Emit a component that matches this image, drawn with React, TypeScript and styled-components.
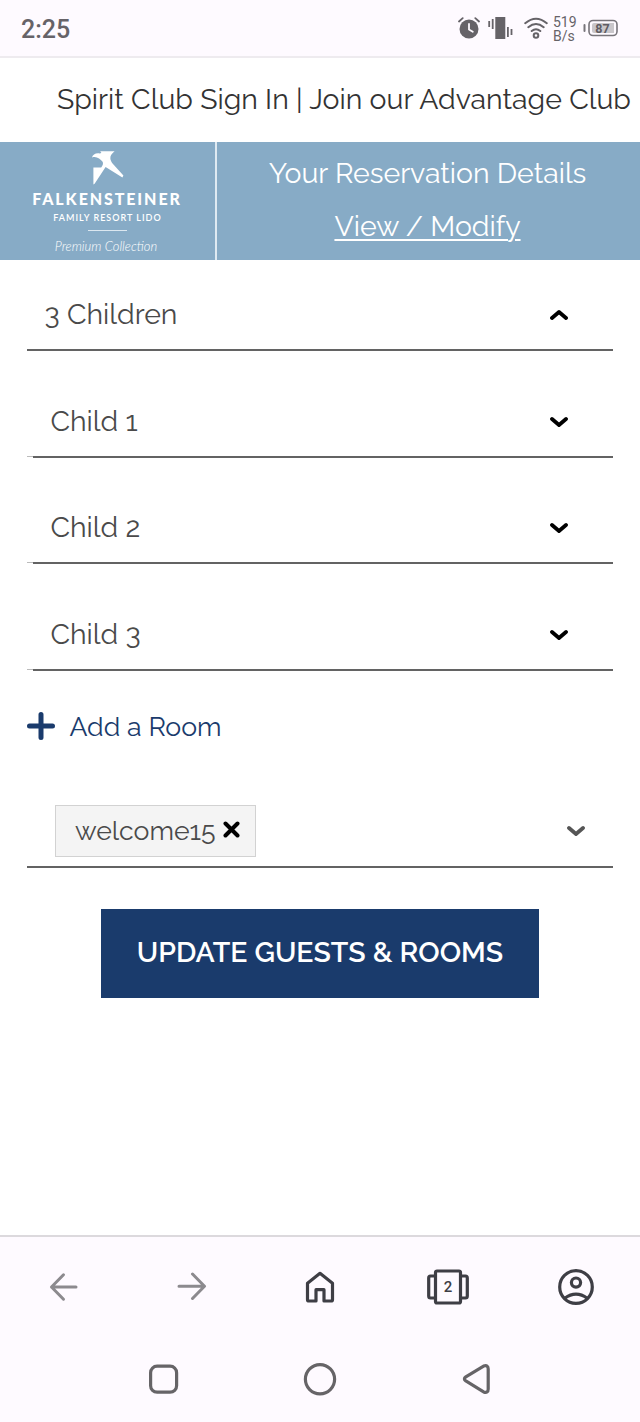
import React from "react";
import styled, { createGlobalStyle } from "styled-components";

const GlobalStyle = createGlobalStyle`
  *, *::before, *::after { box-sizing: border-box; }
  body { margin: 0; background: #fff; }
  button { border: 0; background: none; padding: 0; margin: 0; font: inherit; color: inherit; }
  svg { display: block; flex: none; }
`;

const Screen = styled.div`
  width: 640px;
  height: 1422px;
  display: flex;
  flex-direction: column;
  overflow: hidden;
  background: #fff;
  color: #4a4a4a;
  font-family: Raleway, Lato, sans-serif;
  font-size: 28.44px;
  white-space: nowrap;
`;

const StatusBar = styled.header`
  height: 58px;
  flex: none;
  display: flex;
  align-items: center;
  padding: 0 22px 1px 21px;
  background: #fefaff;
  border-bottom: 2px solid #eeebef;
  color: #666368;
  font-family: Roboto, sans-serif;
`;

const Clock = styled.span`
  flex: 1;
  font-size: 25px;
  font-weight: 500;
  line-height: 30px;
  padding-top: 4px;
`;

const StatusIcons = styled.div`
  display: flex;
  align-items: center;
`;

const Spacer = styled.span<{ $w: number }>`
  width: ${(p) => p.$w}px;
`;

const NetSpeed = styled.span`
  width: 25px;
  margin: 2px 5px 0 5px;
  font-size: 14px;
  line-height: 14px;
`;

const AccountLinks = styled.nav`
  height: 84px;
  flex: none;
  display: flex;
  align-items: center;
  padding: 0 0 2px 57px;
  color: #333;
  letter-spacing: 0.02px;
`;

const Banner = styled.section`
  height: 118px;
  flex: none;
  display: flex;
  background: #87abc6;
  color: #fff;
`;

const Brand = styled.div`
  width: 217px;
  display: flex;
  flex-direction: column;
  align-items: center;
  padding-top: 9px;
  border-right: 2px solid #dfeaf2;
  font-family: Lato, sans-serif;
`;

const BrandName = styled.span`
  margin: 5px 1px 0 0;
  font-size: 16px;
  font-weight: 900;
  line-height: 18px;
  letter-spacing: 1.9px;
`;

const BrandPlace = styled.span`
  margin-top: 4px;
  font-size: 9px;
  font-weight: 600;
  line-height: 12px;
  letter-spacing: 1px;
`;

const BrandRule = styled.span`
  width: 39px;
  height: 1px;
  margin-top: 6px;
  background: #dbe7f0;
`;

const BrandTier = styled.span`
  margin: 6px 3px 0 0;
  font-size: 13px;
  font-style: italic;
  font-weight: 300;
  line-height: 18px;
`;

const Reservation = styled.div`
  flex: 1;
  display: flex;
  flex-direction: column;
  align-items: center;
  padding: 5px 2px 0 0;
  line-height: 53px;
`;

const ModifyLink = styled.a`
  text-decoration: underline;
  text-decoration-thickness: 2px;
  text-underline-offset: 3px;
`;

const Form = styled.main`
  flex: 1;
  display: flex;
  flex-direction: column;
  padding: 0 27px;
`;

const SelectRow = styled.div<{ $height: number }>`
  height: ${(p) => p.$height}px;
  display: flex;
  align-items: flex-end;
  justify-content: space-between;
  padding: 0 45px 15px 17.5px;
  border-bottom: 2px solid #636363;
  line-height: 40px;
`;

const ChildField = styled.div`
  display: flex;
  align-items: flex-end;

  &::before {
    content: "";
    width: 6px;
    height: 1px;
    background: #bbb;
    margin-bottom: 1px;
  }

  > div { flex: 1; }
`;

const ChevronSlot = styled.span`
  display: flex;
  padding-bottom: 13px;
`;

const AddRoom = styled.button`
  display: flex;
  align-items: center;
  gap: 14.5px;
  height: 28px;
  margin-top: 41px;
  color: #1a3b6c;
  font-size: 26.67px;
  line-height: 30px;

  > span { padding-top: 1px; }
`;

const PromoField = styled.div`
  display: flex;
  align-items: center;
  justify-content: space-between;
  height: 63px;
  margin-top: 65px;
  padding: 0 28px 10px;
  border-bottom: 2px solid #636363;
`;

const Chip = styled.span`
  display: flex;
  align-items: center;
  gap: 7px;
  width: 201px;
  height: 52px;
  padding: 0 0 3px 19px;
  background: #f4f4f4;
  border: 1px solid #d2d2d2;
  font-size: 26.67px;

  > span { padding-top: 2px; }
`;

const SubmitButton = styled.button`
  align-self: center;
  width: 438px;
  height: 89px;
  margin-top: 41px;
  padding-bottom: 3px;
  background: #1a3b6c;
  color: #fff;
  font-size: 28.44px;
  font-weight: 600;
`;

const BrowserBar = styled.nav`
  height: 102px;
  flex: none;
  display: grid;
  grid-template-columns: repeat(5, 1fr);
  place-items: center;
  background: #fefaff;
  border-top: 2px solid #dcd9dd;
  color: #3e3e45;
`;

const SystemBar = styled.nav`
  height: 85px;
  flex: none;
  display: flex;
  justify-content: center;
  gap: 122px;
  padding-top: 25px;
  background: #fefaff;
  color: #666467;
`;

const TabCount = styled.text`
  font: 500 15px Roboto, sans-serif;
`;

const BatteryText = styled.text`
  font: 700 12.5px Roboto, sans-serif;
`;

const Chevron = ({ up, color = "#000" }: { up?: boolean; color?: string }) => (
  <svg width="18" height="12" viewBox="0 0 18 12" fill="none" stroke={color} strokeWidth="3.8" strokeLinecap="round" strokeLinejoin="round">
    <path d={up ? "M2 9 9 3l7 6" : "M2 3l7 6 7-6"} />
  </svg>
);

const AlarmIcon = () => (
  <svg width="22" height="22" viewBox="0 0 22 22" fill="none" strokeLinecap="round">
    <circle cx="11" cy="12" r="9.5" fill="#666368" />
    <path d="M1 4.5 4.7 1.2M21 4.5l-3.7-3.3" stroke="#666368" strokeWidth="1.8" />
    <path d="M11 7v5.4l3.8 2.3" stroke="#fefaff" strokeWidth="1.8" />
  </svg>
);

const VibrateIcon = () => (
  <svg width="26" height="22" viewBox="0 0 26 22" fill="#666368">
    <path d="M7.3 0h10v22h-10zM3.8 2h1.8v10H3.8zM.3 4h1.8v6H.3zM19 10h1.8v10H19zM22.6 12h1.8v6h-1.8z" />
  </svg>
);

const WifiIcon = () => (
  <svg width="24" height="22" viewBox="0 0 24 22" fill="none" stroke="#666368" strokeWidth="2" strokeLinecap="round">
    <path d="M1.2 6.2q10.8-9 21.6 0M4.3 10.2q7.7-6.4 15.4 0M7.7 14q4.3-3.6 8.6 0" />
    <circle cx="12" cy="18.5" r="2.3" />
  </svg>
);

const BatteryIcon = () => (
  <svg width="35" height="18" viewBox="0 0 35 18" fill="none">
    <path d="M1.5 6v6" stroke="#77747a" strokeWidth="2" strokeLinecap="round" />
    <rect x="6" y="1.5" width="28" height="15" rx="4" stroke="#77747a" strokeWidth="1.6" />
    <path d="M11 4h20v10H11a2 2 0 0 1-2-2V6a2 2 0 0 1 2-2z" fill="#c9c6ca" />
    <BatteryText x="19.5" y="13.5" textAnchor="middle" fill="#5f5c62">87</BatteryText>
  </svg>
);

const BirdMark = () => (
  <svg width="32" height="34" viewBox="0 0 32 34" fill="#fff">
    <path d="M0 6.5C.6 3.6 3.6 1.8 7.6 2.4L9.4 2 8.2.3h14.4c-1.9 1.6-3.5 3.2-4.1 5.2-.5 2.2.2 4.4 1.6 6.4L31.4 24.4l-1 2.2L13.6 16 2.6 32.8l-1.2.6V16.4h7.8c1.8-2 2.4-4.1 1.2-5.8C8.2 8.2 4.6 4.8 0 6.5z" />
  </svg>
);

const PlusIcon = () => (
  <svg width="28" height="28" viewBox="0 0 28 28" fill="none" stroke="#1a3b6c" strokeWidth="5" strokeLinecap="round">
    <path d="M14 2.5v23M2.5 14h23" />
  </svg>
);

const CloseIcon = () => (
  <svg width="17" height="17" viewBox="0 0 17 17" fill="none" stroke="#000" strokeWidth="4" strokeLinecap="round">
    <path d="m2.5 2.5 12 12M14.5 2.5l-12 12" />
  </svg>
);

const ArrowIcon = ({ forward }: { forward?: boolean }) => (
  <svg width="30" height="30" viewBox="0 0 30 30" fill="none" stroke="#8c8a8e" strokeWidth="3" strokeLinecap="round" strokeLinejoin="round">
    <path d={forward ? "M2 14.2h25M15.5 2 27.5 14.2 15.5 26.5" : "M27 15H2.5M14.5 2.8 2.5 15l12 12.2"} />
  </svg>
);

const HomeIcon = () => (
  <svg width="30" height="32" viewBox="0 0 30 32" fill="none" stroke="currentColor" strokeWidth="3.2" strokeLinejoin="round">
    <path d="M2.5 12.2 15 2.3l12.5 9.9v16.2q0 1.6-1.6 1.6H19V18.7h-8V30H4.1q-1.6 0-1.6-1.6z" />
  </svg>
);

const TabsIcon = () => (
  <svg width="42" height="36" viewBox="0 0 42 36" fill="none" stroke="currentColor" strokeWidth="3.2" strokeLinejoin="round">
    <rect x="8.5" y="2" width="25" height="32" rx="1.5" />
    <path d="M8.5 7h-5Q1.7 7 1.7 9v18q0 2 1.8 2h5M33.5 7h5q1.8 0 1.8 2v18q0 2-1.8 2h-5" />
    <TabCount x="21" y="23.3" textAnchor="middle" fill="currentColor" stroke="none">2</TabCount>
  </svg>
);

const ProfileIcon = () => (
  <svg width="36" height="36" viewBox="0 0 36 36" fill="none" stroke="currentColor" strokeWidth="3.2">
    <circle cx="18" cy="18" r="16.3" />
    <circle cx="18" cy="13.6" r="4.6" />
    <path d="M6.8 29.2q11.2-8.2 22.4 0" />
  </svg>
);

const RecentsIcon = () => (
  <svg width="34" height="34" viewBox="0 0 34 34" fill="none" stroke="currentColor" strokeWidth="3.2">
    <rect x="3.6" y="4.2" width="26" height="26" rx="6.5" />
  </svg>
);

const HomeCircleIcon = () => (
  <svg width="34" height="34" viewBox="0 0 34 34" fill="none" stroke="currentColor" strokeWidth="3.2">
    <circle cx="17" cy="17.2" r="14.6" />
  </svg>
);

const BackTriangleIcon = () => (
  <svg width="34" height="34" viewBox="0 0 34 34" fill="none" stroke="currentColor" strokeWidth="3.2" strokeLinejoin="round">
    <path d="M24.6 4.1 6.8 14.9q-2.8 2 0 4l17.8 11q4.6 1.6 4.6-3V7.1q0-4.6-4.6-3z" />
  </svg>
);

const children = [
  { label: "Child 1", height: 107 },
  { label: "Child 2", height: 106 },
  { label: "Child 3", height: 107 },
];

export default function App() {
  return (
    <Screen>
      <GlobalStyle />
      <StatusBar>
        <Clock>2:25</Clock>
        <StatusIcons>
          <AlarmIcon />
          <Spacer $w={8} />
          <VibrateIcon />
          <Spacer $w={10} />
          <WifiIcon />
          <NetSpeed>519<br />B/s</NetSpeed>
          <BatteryIcon />
        </StatusIcons>
      </StatusBar>

      <AccountLinks>Spirit Club Sign In | Join our Advantage Club</AccountLinks>

      <Banner>
        <Brand>
          <BirdMark />
          <BrandName>FALKENSTEINER</BrandName>
          <BrandPlace>FAMILY RESORT LIDO</BrandPlace>
          <BrandRule />
          <BrandTier>Premium Collection</BrandTier>
        </Brand>
        <Reservation>
          <span>Your Reservation Details</span>
          <ModifyLink>View / Modify</ModifyLink>
        </Reservation>
      </Banner>

      <Form>
        <SelectRow $height={91}>
          <span>3 Children</span>
          <ChevronSlot><Chevron up /></ChevronSlot>
        </SelectRow>
        {children.map((child) => (
          <ChildField key={child.label}>
            <SelectRow $height={child.height}>
              <span>{child.label}</span>
              <ChevronSlot><Chevron /></ChevronSlot>
            </SelectRow>
          </ChildField>
        ))}
        <AddRoom>
          <PlusIcon />
          <span>Add a Room</span>
        </AddRoom>
        <PromoField>
          <Chip>
            <span>welcome15</span>
            <CloseIcon />
          </Chip>
          <Chevron color="#555" />
        </PromoField>
        <SubmitButton>UPDATE GUESTS &amp; ROOMS</SubmitButton>
      </Form>

      <BrowserBar>
        <ArrowIcon />
        <ArrowIcon forward />
        <HomeIcon />
        <TabsIcon />
        <ProfileIcon />
      </BrowserBar>
      <SystemBar>
        <RecentsIcon />
        <HomeCircleIcon />
        <BackTriangleIcon />
      </SystemBar>
    </Screen>
  );
}
